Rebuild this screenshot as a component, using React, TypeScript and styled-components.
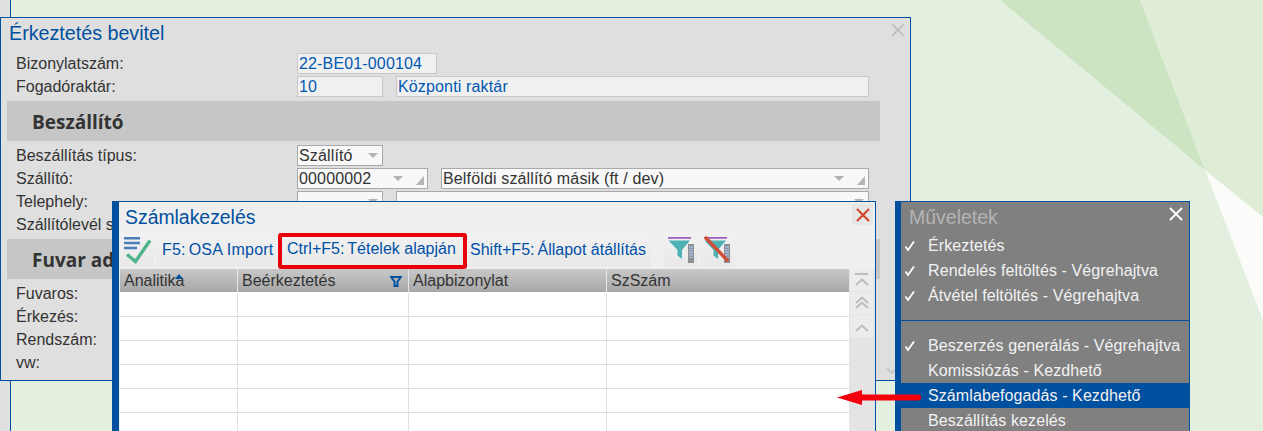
import React from "react";
import styled, { createGlobalStyle } from "styled-components";

const BLUE = "#0050a0";

const Global = createGlobalStyle`
  html, body { margin: 0; padding: 0; height: 100%; overflow: hidden; }
  body { font-family: "Liberation Sans", Arial, sans-serif; }
  #root { height: 100%; }
`;

const Desktop = styled.div`
  position: relative;
  width: 1263px;
  height: 431px;
  overflow: hidden;
  background: #e4f0df;
`;

const Backdrop = styled.svg`
  position: absolute;
  inset: 0;
`;

const BackStrip = styled.div`
  position: absolute;
  left: 0;
  top: 0;
  bottom: 0;
  width: 10px;
  background: #e0e0e0;
  border-right: 1px solid ${BLUE};
`;

const MainWindow = styled.section`
  position: absolute;
  left: 0;
  top: 17px;
  width: 909px;
  height: 362px;
  background: #dfdfdf;
  border: 1px solid ${BLUE};
`;

const Title = styled.h1<{ $pad: number; $size: number }>`
  margin: 0;
  height: 35px;
  padding-left: ${(p) => p.$pad}px;
  font-size: ${(p) => p.$size}px;
  font-weight: 400;
  line-height: 30px;
  color: ${BLUE};
`;

const CloseMain = styled.svg`
  position: absolute;
  right: 5px;
  top: 5px;
`;

const Rows = styled.div`
  display: flex;
  flex-direction: column;
  gap: 2px;
  padding-left: 15px;
`;

const Row = styled.div`
  display: flex;
  align-items: center;
  height: 21px;
`;

const Label = styled.span`
  width: 281px;
  flex: none;
  font-size: 16px;
  color: #333;
  white-space: nowrap;
`;

const Field = styled.div<{ $w: number; $ml?: number; $sel?: boolean }>`
  position: relative;
  box-sizing: border-box;
  width: ${(p) => p.$w}px;
  height: 21px;
  margin-left: ${(p) => p.$ml ?? 0}px;
  padding-left: 1px;
  font-size: 16px;
  letter-spacing: 0.15px;
  line-height: 19px;
  white-space: nowrap;
  background: ${(p) => (p.$sel ? "#f8f8f8" : "#f0f0f0")};
  border: 1px solid ${(p) => (p.$sel ? "#a9a9a9" : "#c9c9c9")};
  color: ${(p) => (p.$sel ? "#333" : "#0058b0")};
`;

const Arrow = styled.i<{ $right: number }>`
  position: absolute;
  right: ${(p) => p.$right}px;
  top: 7px;
  width: 0;
  height: 0;
  border-left: 5.5px solid transparent;
  border-right: 5.5px solid transparent;
  border-top: 5px solid #b2b2b2;
`;

const Grip = styled.i`
  position: absolute;
  right: 3px;
  bottom: 3px;
  width: 0;
  height: 0;
  border-left: 8px solid transparent;
  border-bottom: 9px solid #b5b5b5;
`;

const Band = styled.h2`
  box-sizing: border-box;
  width: 873px;
  height: 40px;
  margin: 4px 0 4px 6px;
  padding-left: 25px;
  background: #c6c6c6;
  font-family: "Open Sans", sans-serif;
  font-size: 19px;
  font-weight: 700;
  line-height: 42px;
  color: #333;
`;

const ScrollChevron = styled.svg`
  position: absolute;
  right: 12px;
  bottom: 5px;
`;

const InvoiceWindow = styled.section`
  position: absolute;
  left: 112px;
  top: 201px;
  width: 755px;
  height: 240px;
  background: #efefef;
  border-top: 1px solid ${BLUE};
  border-right: 1px solid ${BLUE};
  border-left: 7px solid ${BLUE};
  padding-left: 1px;
`;

const CloseRed = styled.button`
  position: absolute;
  right: 2px;
  top: 2px;
  width: 21px;
  height: 21px;
  padding: 0;
  border: 0;
  background: #e6e6e6;
  display: flex;
  align-items: center;
  justify-content: center;
`;

const Toolbar = styled.div`
  display: flex;
  align-items: flex-start;
  height: 36px;
  margin-top: -4px;
`;

const ToolButton = styled.div<{ $w: number; $ml?: number; $mark?: boolean; $pad?: number; $track?: number }>`
  box-sizing: border-box;
  width: ${(p) => p.$w}px;
  height: ${(p) => (p.$mark ? 36 : 34)}px;
  margin-left: ${(p) => p.$ml ?? 0}px;
  display: flex;
  align-items: center;
  justify-content: ${(p) => (p.$pad === undefined ? "center" : "flex-start")};
  padding-left: ${(p) => p.$pad ?? 0}px;
  padding-bottom: ${(p) => (p.$mark ? 4 : 0)}px;
  white-space: nowrap;
  font-size: 16px;
  letter-spacing: ${(p) => p.$track ?? 0}px;
  color: #0050a8;
  background: linear-gradient(#f1f1f1, #e9e9e9);
  border: ${(p) => (p.$mark ? "4px solid #e8000b" : "0")};
  border-radius: ${(p) => (p.$mark ? 3 : 0)}px;
`;

const Key = styled.span`
  margin-right: 3px;
`;

const GridArea = styled.div`
  display: flex;
`;

const Table = styled.div`
  width: 729px;
  flex: none;
`;

const Line = styled.div<{ $head?: boolean }>`
  display: grid;
  grid-template-columns: 118px 171px 198px 242px;
  box-sizing: border-box;
  height: 24px;
  background: ${(p) => (p.$head ? "linear-gradient(#c8c8c8, #a7a7a7)" : "#fff")};
  border-bottom: 1px solid ${(p) => (p.$head ? "#fff" : "#dedede")};
`;

const HeadCell = styled.div`
  position: relative;
  padding-left: 4px;
  font-size: 16px;
  line-height: 23px;
  color: #333;
  border-right: 1px solid #e6e6e6;
  &:last-child { border-right: 0; }
`;

const SortMark = styled.i`
  position: absolute;
  left: 55px;
  top: 5px;
  width: 0;
  height: 0;
  border-left: 4px solid transparent;
  border-right: 4px solid transparent;
  border-bottom: 5px solid ${BLUE};
`;

const FilterMark = styled.svg`
  position: absolute;
  right: 6px;
  top: 7px;
`;

const BodyCell = styled.div`
  border-right: 1px solid #e0e0e0;
  &:last-child { border-right: 0; }
`;

const Pager = styled.div`
  flex: 1;
  display: flex;
  flex-direction: column;
  gap: 1px;
  padding-left: 1px;
  height: 240px;
  background: #e4e4e4;
`;

const PagerButton = styled.div`
  width: 23px;
  height: 22px;
  display: flex;
  align-items: center;
  justify-content: center;
  background: #ececec;
`;

const ActionPanel = styled.aside`
  position: absolute;
  left: 895px;
  top: 201px;
  width: 288px;
  height: 240px;
  background: #808080;
  border-top: 1px solid ${BLUE};
  border-right: 1px solid ${BLUE};
  border-left: 6px solid ${BLUE};
`;

const CloseWhite = styled.svg`
  position: absolute;
  right: 6px;
  top: 5px;
`;

const ActionTitle = styled.h3`
  margin: 0;
  height: 31px;
  padding-left: 8px;
  font-size: 19.5px;
  font-weight: 400;
  line-height: 30px;
  color: #b4b4b4;
`;

const Action = styled.div<{ $active?: boolean }>`
  display: flex;
  align-items: center;
  height: 25px;
  padding-left: 27px;
  position: relative;
  font-size: 16px;
  letter-spacing: 0.1px;
  white-space: nowrap;
  color: #f2f2f2;
  background: ${(p) => (p.$active ? "#0050a0" : "transparent")};
`;

const Check = styled.svg`
  position: absolute;
  left: 3px;
  top: 7px;
`;

const Divider = styled.div`
  height: 12px;
  border-bottom: 1px solid ${BLUE};
  margin-bottom: 12px;
`;

const PointerArrow = styled.svg`
  position: absolute;
  left: 837px;
  top: 390px;
`;

const Tick = () => (
  <Check width="12" height="12" viewBox="0 0 12 12">
    <path d="M1.5 6.5 L4 10 L10 1.5" fill="none" stroke="#fff" strokeWidth="1.8" />
  </Check>
);

const FunnelIcon = ({ off }: { off?: boolean }) => (
  <svg width="34" height="34" viewBox="0 0 34 34">
    <rect x="4" y="4" width="23" height="1.8" fill="#a55fc0" />
    <path d="M4.5 7.5 H26 L18 17 V26 L13.5 22.5 V17 Z" fill="#4eb2b5" />
    <rect x="24" y="11" width="6" height="19" fill="#8f8f8f" />
    <path d="M25 14h4M25 16.6h4M25 19.2h4M25 21.8h4M25 24.4h4" stroke="#9dc0ec" strokeWidth="1.4" />
    {off && <path d="M5 4 L28 28" stroke="#cf4e35" strokeWidth="3.4" />}
  </svg>
);

const ListCheckIcon = () => (
  <svg width="34" height="34" viewBox="0 0 34 34">
    <path d="M4 5.3 H20 M4 10 H20 M4 15 H17" stroke="#4d7db8" strokeWidth="2.4" fill="none" />
    <path d="M7 21.5 L15.5 28.5 L30 7.5" stroke="#4fb38b" strokeWidth="3.4" fill="none" />
  </svg>
);

const ChevUp = ({ bar, double }: { bar?: boolean; double?: boolean }) => (
  <svg width="16" height="16" viewBox="0 0 16 16">
    {bar && <path d="M1 2 H14" stroke="#bdbdbd" strokeWidth="2" />}
    {double && <path d="M2 8 L8 2.5 L14 8" stroke="#bdbdbd" strokeWidth="2" fill="none" />}
    <path d="M2 13 L8 7.5 L14 13" stroke="#bdbdbd" strokeWidth="2" fill="none" />
  </svg>
);

const emptyRows = [0, 1, 2, 3, 4, 5];

export default function App() {
  return (
    <Desktop>
      <Global />
      <Backdrop width="1263" height="431" viewBox="0 0 1263 431">
        <polygon points="1000,0 1140,0 1205,170" fill="#cde4c3" />
        <polygon points="1140,0 1263,0 1263,217 1205,170" fill="#dfedd7" />
        <polygon points="1205,170 1263,217 1263,320" fill="#fbfcfa" />
      </Backdrop>
      <BackStrip />

      <MainWindow>
        <Title $pad={8} $size={19.7}>Érkeztetés bevitel</Title>
        <CloseMain width="14" height="14" viewBox="0 0 14 14">
          <path d="M1 1 L13 13 M13 1 L1 13" stroke="#c2c2c2" strokeWidth="2" fill="none" />
        </CloseMain>
        <Rows>
          <Row>
            <Label>Bizonylatszám:</Label>
            <Field $w={140}>22-BE01-000104</Field>
          </Row>
          <Row>
            <Label>Fogadóraktár:</Label>
            <Field $w={86}>10</Field>
            <Field $w={473} $ml={13}>Központi raktár</Field>
          </Row>
        </Rows>
        <Band>Beszállító</Band>
        <Rows>
          <Row>
            <Label>Beszállítás típus:</Label>
            <Field $w={86} $sel>Szállító<Arrow $right={4} /></Field>
          </Row>
          <Row>
            <Label>Szállító:</Label>
            <Field $w={131} $sel>00000002<Arrow $right={24} /><Grip /></Field>
            <Field $w={428} $ml={13} $sel>Belföldi szállító másik (ft / dev)<Arrow $right={24} /><Grip /></Field>
          </Row>
          <Row>
            <Label>Telephely:</Label>
            <Field $w={86} $sel><Arrow $right={4} /></Field>
            <Field $w={473} $ml={13} $sel><Arrow $right={4} /></Field>
          </Row>
          <Row>
            <Label>Szállítólevél s</Label>
          </Row>
        </Rows>
        <Band>Fuvar adatok</Band>
        <Rows>
          <Row><Label>Fuvaros:</Label></Row>
          <Row><Label>Érkezés:</Label></Row>
          <Row><Label>Rendszám:</Label></Row>
          <Row><Label>vw:</Label></Row>
        </Rows>
        <ScrollChevron width="12" height="8" viewBox="0 0 12 8">
          <path d="M1 1 L6 6 L11 1" stroke="#c8c8c8" strokeWidth="2" fill="none" />
        </ScrollChevron>
      </MainWindow>

      <InvoiceWindow>
        <Title $pad={5} $size={19.4}>Számlakezelés</Title>
        <CloseRed>
          <svg width="14" height="14" viewBox="0 0 14 14">
            <path d="M1 1 L13 13 M13 1 L1 13" stroke="#d2492f" strokeWidth="2.2" fill="none" />
          </svg>
        </CloseRed>
        <Toolbar>
          <ToolButton $w={34}><ListCheckIcon /></ToolButton>
          <ToolButton $w={120} $ml={2} $pad={6} $track={0.2}><Key>F5:</Key>OSA Import</ToolButton>
          <ToolButton $w={189} $ml={2} $pad={5} $mark><Key>Ctrl+F5:</Key>Tételek alapján</ToolButton>
          <ToolButton $w={182} $ml={2} $pad={1}><Key>Shift+F5:</Key>Állapot átállítás</ToolButton>
          <ToolButton $w={34} $ml={13}><FunnelIcon /></ToolButton>
          <ToolButton $w={34} $ml={2}><FunnelIcon off /></ToolButton>
        </Toolbar>
        <GridArea>
          <Table>
            <Line $head>
              <HeadCell>Analitika<SortMark /></HeadCell>
              <HeadCell>
                Beérkeztetés
                <FilterMark width="12" height="11" viewBox="0 0 12 11">
                  <path d="M1 1 H11 L7.5 5.5 V10 H4.5 V5.5 Z" fill="none" stroke="#0050a0" strokeWidth="2" />
                </FilterMark>
              </HeadCell>
              <HeadCell>Alapbizonylat</HeadCell>
              <HeadCell>SzSzám</HeadCell>
            </Line>
            {emptyRows.map((r) => (
              <Line key={r}>
                <BodyCell />
                <BodyCell />
                <BodyCell />
                <BodyCell />
              </Line>
            ))}
          </Table>
          <Pager>
            <PagerButton><ChevUp bar /></PagerButton>
            <PagerButton><ChevUp double /></PagerButton>
            <PagerButton><ChevUp /></PagerButton>
          </Pager>
        </GridArea>
      </InvoiceWindow>

      <ActionPanel>
        <ActionTitle>Műveletek</ActionTitle>
        <CloseWhite width="14" height="14" viewBox="0 0 14 14">
          <path d="M1 1 L13 13 M13 1 L1 13" stroke="#fff" strokeWidth="2" fill="none" />
        </CloseWhite>
        <Action><Tick />Érkeztetés</Action>
        <Action><Tick />Rendelés feltöltés - Végrehajtva</Action>
        <Action><Tick />Átvétel feltöltés - Végrehajtva</Action>
        <Divider />
        <Action><Tick />Beszerzés generálás - Végrehajtva</Action>
        <Action>Komissiózás - Kezdhető</Action>
        <Action $active>Számlabefogadás - Kezdhető</Action>
        <Action>Beszállítás kezelés</Action>
      </ActionPanel>

      <PointerArrow width="85" height="15" viewBox="0 0 85 15">
        <path d="M0 7.5 L25 0 V4.5 H81 A3 3 0 0 1 81 10.5 H25 V15 Z" fill="#f4000c" />
      </PointerArrow>
    </Desktop>
  );
}
